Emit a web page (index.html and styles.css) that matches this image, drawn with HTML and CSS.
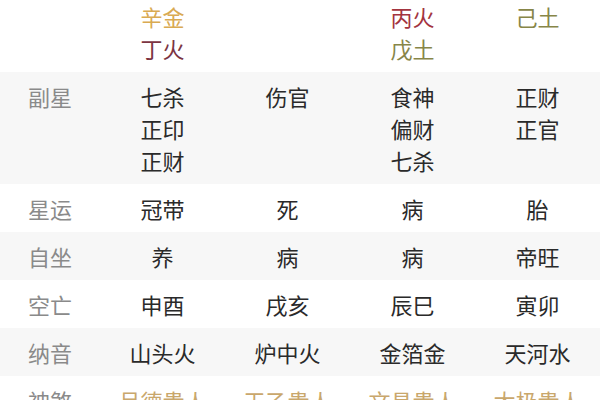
FILE: index.html
```html
<!DOCTYPE html>
<html lang="zh-CN">
<head>
<meta charset="utf-8">
<link rel="stylesheet" href="styles.css">
</head>
<body>
<div class="table">
  <div class="row row-top">
    <div class="label"></div>
    <div class="cell"><span class="gold">辛金</span><span class="maroon">丁火</span></div>
    <div class="cell"></div>
    <div class="cell"><span class="red">丙火</span><span class="olive">戊土</span></div>
    <div class="cell"><span class="olive">己土</span></div>
  </div>
  <div class="row alt">
    <div class="label">副星</div>
    <div class="cell"><span>七杀</span><span>正印</span><span>正财</span></div>
    <div class="cell"><span>伤官</span></div>
    <div class="cell"><span>食神</span><span>偏财</span><span>七杀</span></div>
    <div class="cell"><span>正财</span><span>正官</span></div>
  </div>
  <div class="row">
    <div class="label">星运</div>
    <div class="cell"><span>冠带</span></div>
    <div class="cell"><span>死</span></div>
    <div class="cell"><span>病</span></div>
    <div class="cell"><span>胎</span></div>
  </div>
  <div class="row alt">
    <div class="label">自坐</div>
    <div class="cell"><span>养</span></div>
    <div class="cell"><span>病</span></div>
    <div class="cell"><span>病</span></div>
    <div class="cell"><span>帝旺</span></div>
  </div>
  <div class="row">
    <div class="label">空亡</div>
    <div class="cell"><span>申酉</span></div>
    <div class="cell"><span>戌亥</span></div>
    <div class="cell"><span>辰巳</span></div>
    <div class="cell"><span>寅卯</span></div>
  </div>
  <div class="row alt">
    <div class="label">纳音</div>
    <div class="cell"><span>山头火</span></div>
    <div class="cell"><span>炉中火</span></div>
    <div class="cell"><span>金箔金</span></div>
    <div class="cell"><span>天河水</span></div>
  </div>
  <div class="row">
    <div class="label">神煞</div>
    <div class="cell"><span class="shensha">月德贵人</span></div>
    <div class="cell"><span class="shensha">天乙贵人</span></div>
    <div class="cell"><span class="shensha">文昌贵人</span></div>
    <div class="cell"><span class="shensha">太极贵人</span></div>
  </div>
</div>
</body>
</html>
```

FILE: styles.css
```css
html, body {
  margin: 0;
  padding: 0;
  background: #ffffff;
  overflow: hidden;
}
body {
  width: 600px;
  height: 400px;
  font-family: "Noto Sans CJK SC", "Noto Sans", sans-serif;
  font-size: 22px;
  line-height: 32px;
  color: #2a2a2a;
}
.table {
  display: flex;
  flex-direction: column;
}
.row {
  display: grid;
  grid-template-columns: 100px repeat(4, 125px);
  padding: 8px 0;
  background: #ffffff;
}
.row.alt {
  background: #f7f7f7;
}
.row.row-top {
  padding-top: 0;
}
.label {
  text-align: center;
  color: #8a8a8a;
}
.cell {
  display: flex;
  flex-direction: column;
  align-items: center;
}
.gold { color: #d9aa52; }
.maroon { color: #7c3442; }
.red { color: #a3343f; }
.olive { color: #878648; }
.shensha { color: #c9a76c; }
```
